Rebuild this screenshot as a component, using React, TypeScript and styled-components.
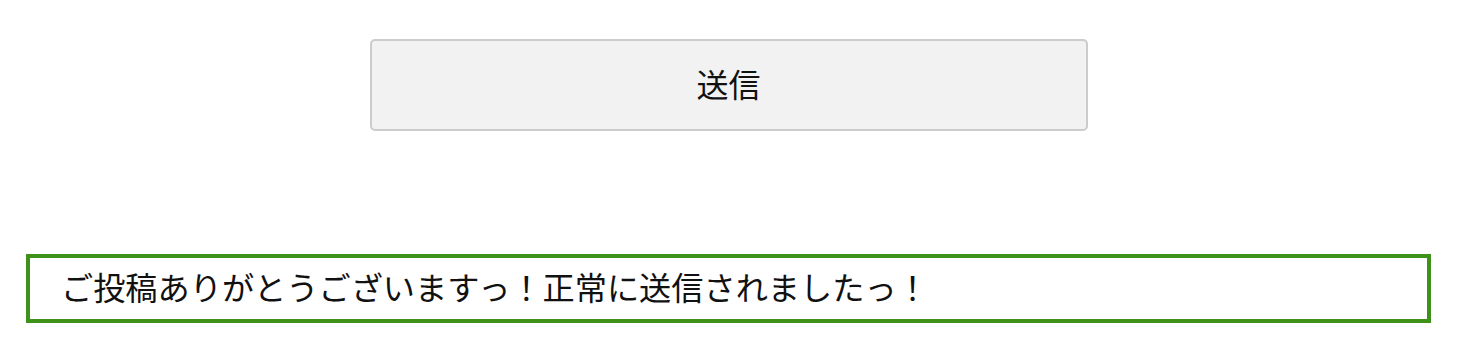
import React from "react";
import styled, { createGlobalStyle } from "styled-components";

const GlobalStyle = createGlobalStyle`
  html, body {
    margin: 0;
    padding: 0;
    background: #ffffff;
  }
  body {
    font-family: "Noto Sans CJK JP", "Noto Sans", sans-serif;
    color: #111;
  }
`;

const Page = styled.div`
  display: flex;
  flex-direction: column;
  padding: 39px 30px 0 26px;
`;

const SubmitRow = styled.div`
  display: flex;
  justify-content: center;
`;

const SubmitButton = styled.button`
  width: 718px;
  height: 92px;
  padding: 0 0 5px;
  background-color: #f2f2f2;
  border: 2px solid #cccccc;
  border-radius: 5px;
  font-family: "Noto Sans CJK JP", sans-serif;
  font-size: 32px;
  color: #111;
  cursor: pointer;
  line-height: 1;
`;

const Notice = styled.div`
  margin-top: 123px;
  height: 69px;
  box-sizing: border-box;
  border: 4px solid #3e9119;
  display: flex;
  align-items: center;
  padding: 0 0 5px 31px;
  font-size: 32.2px;
  line-height: 1;
  color: #111;
`;

const App = () => {
  return (
    <>
      <GlobalStyle />
      <Page>
        <SubmitRow>
          <SubmitButton type="submit">送信</SubmitButton>
        </SubmitRow>
        <Notice>ご投稿ありがとうございますっ！正常に送信されましたっ！</Notice>
      </Page>
    </>
  );
};

export default App;
